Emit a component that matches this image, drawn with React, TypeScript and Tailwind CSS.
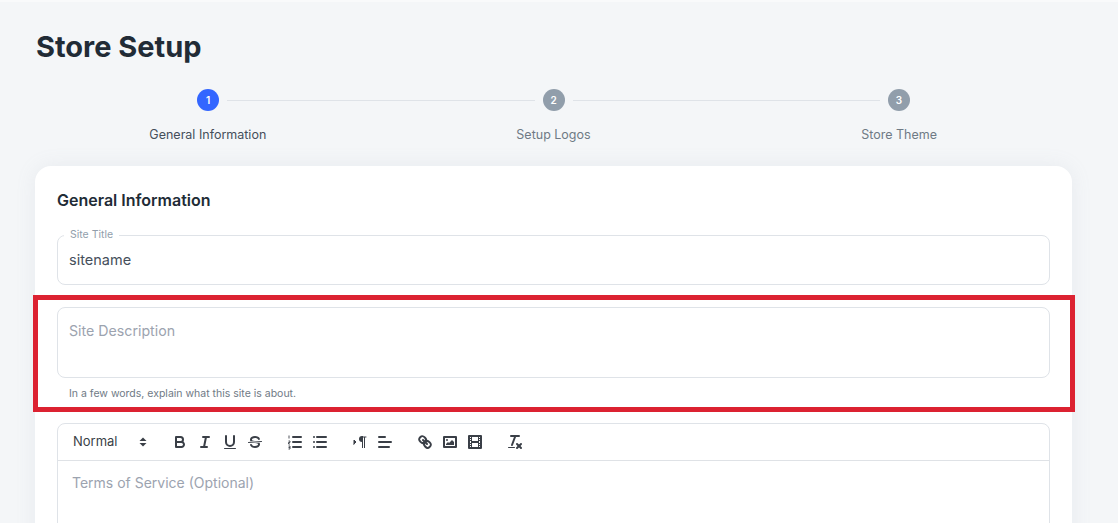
import React from 'react';

const steps = [
  { num: 1, label: 'General Information', active: true },
  { num: 2, label: 'Setup Logos', active: false },
  { num: 3, label: 'Store Theme', active: false },
];

const solid = 'fill-[#3a3f47] stroke-none';

const Icon = ({ children }: { children: React.ReactNode }) => (
  <button className="flex h-6 w-[25px] items-center justify-center">
    <svg viewBox="0 0 18 18" className="h-[18px] w-[18px] fill-none stroke-[#3a3f47] stroke-2" strokeLinecap="round" strokeLinejoin="round">
      {children}
    </svg>
  </button>
);

const Toolbar = () => (
  <div className="flex h-[37px] items-center border-b border-[#dfe2e6] pl-[7px]">
    <div className="mr-[15px] flex w-[87px] items-center justify-between pl-2 text-[13px] font-normal text-[#3a3f47]">
      <span>Normal</span>
      <svg viewBox="0 0 18 18" className="h-[18px] w-[18px]">
        <polygon points="5.5 8 9 4.5 12.5 8" className="fill-[#3a3f47]" />
        <polygon points="5.5 10 9 13.5 12.5 10" className="fill-[#3a3f47]" />
      </svg>
    </div>
    <div className="mr-[15px] flex">
      <Icon>
        <path d="M5,4H9.5A2.5,2.5,0,0,1,12,6.5v0A2.5,2.5,0,0,1,9.5,9H5V4Z" />
        <path d="M5,9h5.5A2.5,2.5,0,0,1,13,11.5v0A2.5,2.5,0,0,1,10.5,14H5V9Z" />
      </Icon>
      <Icon>
        <line x1="7" x2="13" y1="4" y2="4" />
        <line x1="5" x2="11" y1="14" y2="14" />
        <line x1="8" x2="10" y1="14" y2="4" />
      </Icon>
      <Icon>
        <path d="M5,3V9a4.012,4.012,0,0,0,4,4H9a4.012,4.012,0,0,0,4-4V3" />
        <rect height="1" rx="0.5" ry="0.5" width="12" x="3" y="15" className={solid} />
      </Icon>
      <Icon>
        <line x1="15.5" x2="2.5" y1="8.5" y2="9.5" strokeWidth="1" />
        <path className={solid} d="M9.007,8C6.542,7.791,6,7.519,6,6.5,6,5.792,7.283,5,9,5c1.571,0,2.765.679,2.969,1.309a1,1,0,0,0,1.9-.617C13.356,4.106,11.354,3,9,3,6.2,3,4,4.538,4,6.5a3.2,3.2,0,0,0,.5,1.843Z" />
        <path className={solid} d="M8.984,10C11.457,10.208,12,10.479,12,11.5c0,.708-1.283,1.5-3,1.5-1.571,0-2.765-.679-2.969-1.309a1,1,0,1,0-1.9.617C4.644,13.894,6.646,15,9,15c2.8,0,5-1.538,5-3.5a3.2,3.2,0,0,0-.5-1.843Z" />
      </Icon>
    </div>
    <div className="mr-[15px] flex">
      <Icon>
        <line x1="7" x2="15" y1="4" y2="4" />
        <line x1="7" x2="15" y1="9" y2="9" />
        <line x1="7" x2="15" y1="14" y2="14" />
        <path d="M3,2.5V5.5M2.5,8H4V9.5H2.5V11H4M2.5,13H4V16H2.5M2.5,14.5H4" strokeWidth="0.9" strokeLinecap="butt" />
      </Icon>
      <Icon>
        <line x1="6" x2="15" y1="4" y2="4" />
        <line x1="6" x2="15" y1="9" y2="9" />
        <line x1="6" x2="15" y1="14" y2="14" />
        <line x1="3" x2="3" y1="4" y2="4" />
        <line x1="3" x2="3" y1="9" y2="9" />
        <line x1="3" x2="3" y1="14" y2="14" />
      </Icon>
    </div>
    <div className="mr-[15px] flex">
      <Icon>
        <polygon points="3 11 5 9 3 7 3 11" className="fill-[#3a3f47]" strokeWidth="1" />
        <line x1="15" x2="11" y1="4" y2="4" strokeWidth="1" />
        <path className={solid} d="M11,3a3,3,0,0,0,0,6h1V3H11Z" />
        <rect height="11" width="1" x="11" y="4" className={solid} />
        <rect height="11" width="1" x="13" y="4" className={solid} />
      </Icon>
      <Icon>
        <line x1="3" x2="15" y1="9" y2="9" />
        <line x1="3" x2="13" y1="14" y2="14" />
        <line x1="3" x2="9" y1="4" y2="4" />
      </Icon>
    </div>
    <div className="mr-[15px] flex">
      <Icon>
        <line x1="7" x2="11" y1="7" y2="11" />
        <path d="M8.9,4.577a3.476,3.476,0,0,1,.36,4.679A3.476,3.476,0,0,1,4.577,8.9C3.185,7.5,2.035,6.4,4.217,4.217S7.5,3.185,8.9,4.577Z" />
        <path d="M13.423,9.1a3.476,3.476,0,0,0-4.679-.36,3.476,3.476,0,0,0,.36,4.679c1.392,1.392,2.5,2.542,4.679.36S14.815,10.5,13.423,9.1Z" />
      </Icon>
      <Icon>
        <rect height="10" width="12" x="3" y="4" />
        <circle cx="6" cy="7" r="1" className={solid} />
        <polyline points="5 12 5 11 7 9 8 10 11 7 13 9 13 12 5 12" className={solid} />
      </Icon>
      <Icon>
        <rect height="12" width="12" x="3" y="3" />
        <rect height="12" width="1" x="5" y="3" className={solid} />
        <rect height="12" width="1" x="12" y="3" className={solid} />
        <rect height="2" width="8" x="5" y="8" className={solid} />
        <rect height="1" width="3" x="3" y="5" className={solid} />
        <rect height="1" width="3" x="3" y="7" className={solid} />
        <rect height="1" width="3" x="3" y="10" className={solid} />
        <rect height="1" width="3" x="3" y="12" className={solid} />
        <rect height="1" width="3" x="12" y="5" className={solid} />
        <rect height="1" width="3" x="12" y="7" className={solid} />
        <rect height="1" width="3" x="12" y="10" className={solid} />
        <rect height="1" width="3" x="12" y="12" className={solid} />
      </Icon>
    </div>
    <Icon>
      <line x1="5" x2="13" y1="3" y2="3" />
      <line x1="6" x2="9.35" y1="12" y2="3" />
      <line x1="11" x2="15" y1="11" y2="15" />
      <line x1="15" x2="11" y1="11" y2="15" />
      <rect height="1" rx="0.5" ry="0.5" width="7" x="2" y="14" className={solid} />
    </Icon>
  </div>
);

export default function App() {
  return (
    <div className="h-screen overflow-hidden border-t-2 border-t-[#f9fafb] bg-[#f4f6f8] px-[35px] pt-[26px] font-['Inter',sans-serif]">
      <h1 className="mb-[23px] pl-px text-[29px] font-bold leading-[38px] text-[#212b36]">Store Setup</h1>

      <div className="flex items-center pl-[162px] pr-[173px]">
        {steps.map((step, i) => (
          <React.Fragment key={step.num}>
            <span
              className={`flex h-[22px] w-[22px] shrink-0 items-center justify-center rounded-full text-[10px] font-semibold text-white ${
                step.active ? 'bg-[#3366ff]' : 'bg-[#919eab]'
              }`}
            >
              {step.num}
            </span>
            {i < steps.length - 1 && <span className="mx-2 h-px flex-1 bg-[#dfe3e8]" />}
          </React.Fragment>
        ))}
      </div>
      <div className="mt-[14px] grid w-[1037px] grid-cols-3 text-center text-[12.5px] leading-[20px]">
        {steps.map((step) => (
          <span key={step.num} className={step.active ? 'text-[#454f5b]' : 'text-[#6f7a85]'}>
            {step.label}
          </span>
        ))}
      </div>

      <div className="mt-[21px] h-[500px] w-[1037px] rounded-2xl bg-white px-[22px] pt-[23px] shadow-[0_0_20px_rgba(145,158,171,0.12)]">
        <h2 className="text-base font-semibold leading-[22px] text-[#212b36]">General Information</h2>

        <fieldset className="mt-[18px] h-[56px] rounded-lg border border-[#dfe3e8] pl-[6px] pr-3">
          <legend className="px-[6px] text-[10.5px] leading-[12px] text-[#919eab]">Site Title</legend>
          <div className="pl-[5px] pt-[9px] text-[14.5px] leading-[20px] text-[#454f5b]">sitename</div>
        </fieldset>

        <div className="mt-[22px] h-[71px] rounded-lg border border-[#dfe3e8] px-[11px] pt-[13px] text-[14.2px] leading-[20px] text-[#9ca3af]">
          Site Description
        </div>
        <p className="mt-2 pl-3 text-[10.5px] leading-[15px] text-[#6f7a85]">In a few words, explain what this site is about.</p>

        <div className="mt-[22px] h-[200px] rounded-lg border border-[#dfe3e8]">
          <Toolbar />
          <div className="px-[14px] pt-3 text-[14px] leading-[20px] text-[#9ca3af]">Terms of Service (Optional)</div>
        </div>
      </div>

      <div className="absolute left-[33px] top-[295px] h-[117px] w-[1042px] border-[5px] border-[#dc2231]" />
    </div>
  );
}
